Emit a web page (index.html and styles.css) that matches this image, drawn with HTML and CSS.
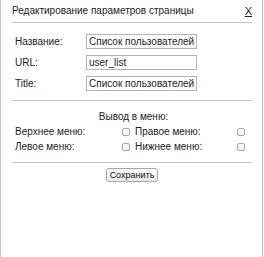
FILE: index.html
```html
<!DOCTYPE html>
<html lang="ru">

<head>
  <meta charset="UTF-8">
  <title>Редактирование параметров страницы</title>
  <link rel="stylesheet" href="styles.css">
</head>

<body>
  <div class="dialog">
    <!-- заголовок -->
    <div class="dialog-header">
      <span class="dialog-title">Редактирование параметров страницы</span>
      <a class="dialog-close">X</a>
    </div>

    <!-- основные поля -->
    <div class="fields">
      <label class="field-label">Название:</label>
      <input class="field-input" type="text" value="Список пользователей">
      <label class="field-label">URL:</label>
      <input class="field-input" type="text" value="user_list">
      <label class="field-label">Title:</label>
      <input class="field-input" type="text" value="Список пользователей">
    </div>

    <!-- вывод в меню -->
    <div class="menus">
      <div class="menus-title">Вывод в меню:</div>
      <div class="menus-grid">
        <span>Верхнее меню:</span><span class="check"></span>
        <span>Правое меню:</span><span class="check"></span>
        <span>Левое меню:</span><span class="check"></span>
        <span>Нижнее меню:</span><span class="check"></span>
      </div>
    </div>

    <div class="actions">
      <button class="btn">Сохранить</button>
    </div>
  </div>
</body>

</html>
```

FILE: styles.css
```css
* {
  margin: 0;
  padding: 0;
  box-sizing: border-box;
}

body {
  font-family: "Liberation Sans", Arial, sans-serif;
  font-size: 10px;
  color: #222;
  background: #fff;
}

.dialog {
  width: 263px;
  height: 257px;
  border-left: 1px solid #c8c8c8;
  border-right: 1px solid #b8b8b8;
  padding: 0 10px 0 11px;
}

.dialog-header {
  height: 23px;
  display: flex;
  justify-content: space-between;
  align-items: center;
  padding: 0 0 1px 0;
  border-bottom: 1px solid #c4c4c4;
}

.dialog-title {
  font-size: 10px;
}

.dialog-close {
  font-size: 11px;
  text-decoration: underline;
  margin-right: 0;
  color: #222;
}

.fields {
  display: grid;
  grid-template-columns: 71px 111px;
  row-gap: 6px;
  align-items: center;
  padding: 11px 0 9px 3px;
  border-bottom: 1px solid #c4c4c4;
}

.field-input {
  height: 15px;
  border: 1px solid #b5b5b5;
  font-family: inherit;
  font-size: 10px;
  color: #222;
  padding: 0 2px;
  outline: none;
}

.menus {
  padding: 10px 0 9px 3px;
  border-bottom: 1px solid #c4c4c4;
}

.menus-title {
  text-align: center;
  height: 12px;
  line-height: 12px;
  margin-bottom: 3px;
}

.menus-grid {
  display: grid;
  grid-template-columns: 107px 13px 102px 8px;
  row-gap: 3px;
  align-items: center;
  line-height: 12px;
}

.check {
  width: 8px;
  height: 8px;
  border: 1px solid #aaa;
  border-radius: 2px;
  background: linear-gradient(#fff, #eee);
}

.actions {
  display: flex;
  justify-content: center;
  padding-top: 5px;
}

.btn {
  width: 52px;
  height: 14px;
  font-family: inherit;
  font-size: 9px;
  color: #111;
  border: 1px solid #a8a8a8;
  border-radius: 3px;
  background: linear-gradient(#fff, #e8e8e8);
}
```
